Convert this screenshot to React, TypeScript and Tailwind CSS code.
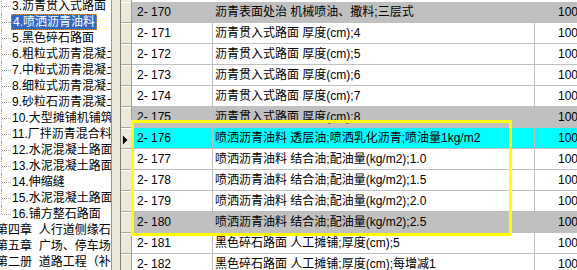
import React from "react";

const treeItems = [
  { text: "3.沥青贯入式路面", child: true },
  { text: "4.喷洒沥青油料", child: true, selected: true },
  { text: "5.黑色碎石路面", child: true },
  { text: "6.粗粒式沥青混凝土路面", child: true },
  { text: "7.中粒式沥青混凝土路面", child: true },
  { text: "8.细粒式沥青混凝土路面", child: true },
  { text: "9.砂粒石沥青混凝土路面", child: true },
  { text: "10.大型摊铺机铺筑沥青混凝土", child: true },
  { text: "11.厂拌沥青混合料", child: true },
  { text: "12.水泥混凝土路面", child: true },
  { text: "13.水泥混凝土路面", child: true },
  { text: "14.伸缩缝", child: true },
  { text: "15.水泥混凝土路面", child: true },
  { text: "16.铺方整石路面", child: true, last: true },
  { text: "第四章  人行道侧缘石及人行道", child: false },
  { text: "第五章  广场、停车场", child: false },
  { text: "第二册  道路工程（补充）", child: false },
];

const rows = [
  { code: "2- 170", desc: "沥青表面处治 机械喷油、撒料;三层式", tone: "gray" },
  { code: "2- 171", desc: "沥青贯入式路面 厚度(cm);4", tone: "white" },
  { code: "2- 172", desc: "沥青贯入式路面 厚度(cm);5", tone: "white" },
  { code: "2- 173", desc: "沥青贯入式路面 厚度(cm);6", tone: "white" },
  { code: "2- 174", desc: "沥青贯入式路面 厚度(cm);7", tone: "white" },
  { code: "2- 175", desc: "沥青贯入式路面 厚度(cm);8", tone: "gray" },
  { code: "2- 176", desc: "喷洒沥青油料 透层油;喷洒乳化沥青;喷油量1kg/m2", tone: "cyan", current: true },
  { code: "2- 177", desc: "喷洒沥青油料 结合油;配油量(kg/m2);1.0", tone: "white" },
  { code: "2- 178", desc: "喷洒沥青油料 结合油;配油量(kg/m2);1.5", tone: "white" },
  { code: "2- 179", desc: "喷洒沥青油料 结合油;配油量(kg/m2);2.0", tone: "white" },
  { code: "2- 180", desc: "喷洒沥青油料 结合油;配油量(kg/m2);2.5", tone: "gray" },
  { code: "2- 181", desc: "黑色碎石路面 人工摊铺;厚度(cm);5", tone: "white" },
  { code: "2- 182", desc: "黑色碎石路面 人工摊铺;厚度(cm);每增减1", tone: "white" },
];

const toneClass: Record<string, string> = {
  gray: "bg-[#C0C0C0]",
  white: "bg-white",
  cyan: "bg-[#00FFFF]",
};

const Tree = () => (
  <div className="w-[112px] shrink-0 overflow-hidden border-r border-[#7F9DB9] bg-white">
    <div className="-mt-[2px]">
      {treeItems.map((item, i) => (
        <div key={i} className="flex h-[16px] items-center whitespace-pre">
          {item.child ? (
            <div className="relative h-[16px] w-[12px] shrink-0">
              <div
                className={
                  item.last
                    ? "absolute left-[1px] top-0 h-[8px] border-l border-dotted border-[#A0A0A0]"
                    : "absolute left-[1px] top-0 h-[16px] border-l border-dotted border-[#A0A0A0]"
                }
              />
              <div className="absolute left-[2px] top-[8px] w-[9px] border-t border-dotted border-[#A0A0A0]" />
            </div>
          ) : null}
          {item.selected ? (
            <span className="-ml-[1px] border border-dotted border-[#D09A50] bg-[#316AC5] px-[1px] leading-[14px] text-white">
              {item.text}
            </span>
          ) : (
            <span className={item.child ? "leading-[16px]" : "-ml-[4px] leading-[16px]"}>
              {item.text}
            </span>
          )}
        </div>
      ))}
    </div>
  </div>
);

const Indicator = () => (
  <div className="w-[11px] shrink-0 border-r border-[#A0A0A0] bg-[#ECE9D8] pt-[2px]">
    {rows.map((r, i) => (
      <div
        key={i}
        className="flex h-[21px] items-center border-b border-t border-b-[#ACA899] border-t-white"
      >
        {r.current && (
          <svg width="10" height="10" viewBox="0 0 10 10" className="ml-[1px] mt-[3px]">
            <polygon points="1,0 6,5 1,10" fill="#000" />
          </svg>
        )}
      </div>
    ))}
  </div>
);

const Grid = () => (
  <div className="flex-1 overflow-hidden border-l border-[#808080] bg-white">
    <div className="flex">
      <Indicator />
      <div className="flex-1 pt-[2px]">
        {rows.map((r, i) => (
          <div
            key={i}
            className={`flex h-[21px] items-center whitespace-nowrap border-b border-[#C0C0C0] ${toneClass[r.tone]}`}
          >
            <div className="flex h-full w-[81px] shrink-0 items-center border-r border-[#C0C0C0] pl-[5px]">
              {r.code}
            </div>
            <div className="flex h-full w-[322px] shrink-0 items-center overflow-hidden border-r border-[#C0C0C0] pl-[2px]">
              {r.desc}
            </div>
            <div className="flex h-full w-[44px] shrink-0 items-center justify-end pr-[1px]">
              100
            </div>
          </div>
        ))}
      </div>
    </div>
  </div>
);

export default function App() {
  return (
    <div className="relative flex h-[270px] w-[577px] overflow-hidden bg-white font-['Liberation_Sans','Noto_Sans_CJK_SC',sans-serif] text-[12px] text-black">
      <Tree />
      <div className="w-[8px] shrink-0 bg-[#ECE9D8]" />
      <Grid />
      <div className="pointer-events-none absolute left-[131px] top-[120px] h-[116px] w-[381px] border-[3px] border-[#FFFF00]" />
    </div>
  );
}
